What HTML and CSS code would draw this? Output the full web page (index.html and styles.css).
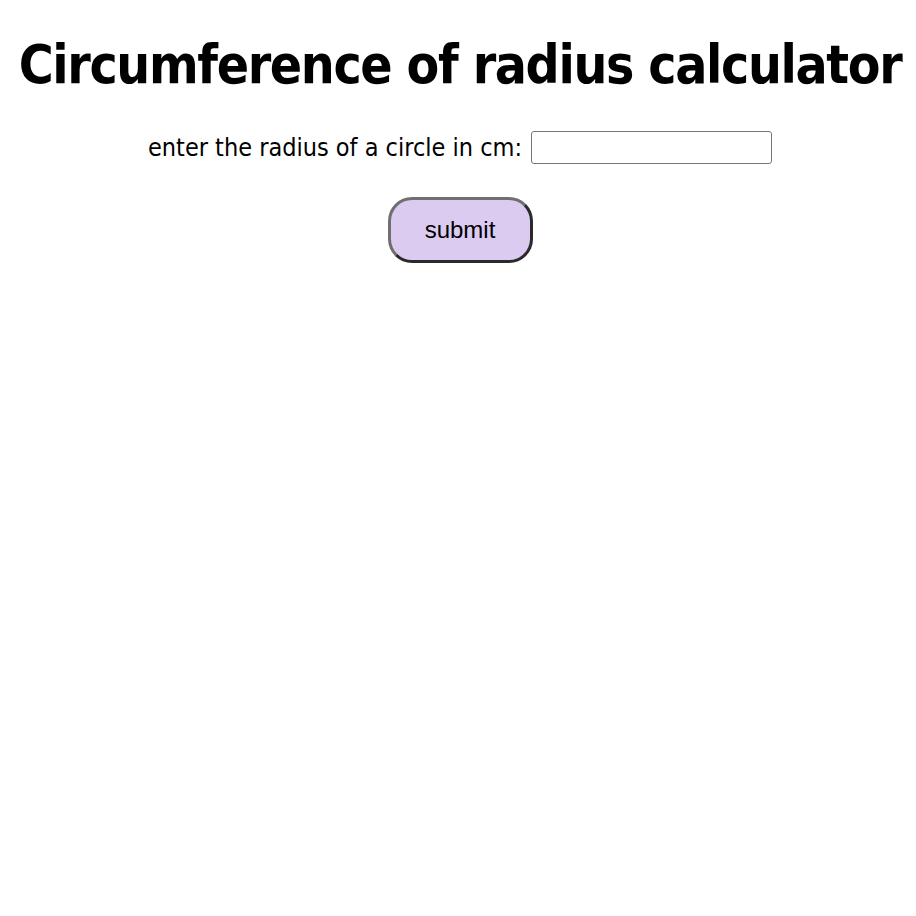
FILE: index.html
```html
<!DOCTYPE html>
<html>
<head>
<meta charset="utf-8">
<link rel="stylesheet" href="styles.css">
</head>
<body>
<h1 class="title">Circumference of radius calculator</h1>
<form class="calc">
  <label class="row">enter the radius of a circle in cm: <input class="field" type="text"></label>
  <button class="submit" type="button">submit</button>
</form>
</body>
</html>
```
FILE: styles.css
```css
body {
  margin: 8px 6px 8px 10px;
  font-family: "DejaVu Sans Condensed", "DejaVu Sans", sans-serif;
  background: #fff;
  color: #000;
}
.title {
  margin: 26px 0 0;
  text-align: center;
  font-size: 53px;
  font-weight: bold;
  letter-spacing: -1.35px;
  line-height: 62px;
}
.calc {
  display: flex;
  flex-direction: column;
  align-items: center;
  margin-top: 35px;
}
.row {
  display: flex;
  align-items: center;
  gap: 9px;
  font-size: 25px;
}
.field {
  width: 241px;
  height: 33px;
  box-sizing: border-box;
  border: 1px solid #767676;
  border-radius: 3px;
  padding: 0 4px;
  font-size: 16px;
}
.submit {
  margin-top: 33px;
  width: 145px;
  height: 66px;
  box-sizing: border-box;
  background: #dccbf0;
  border: 3px solid #2a2a2a;
  border-top-color: #6f6f6f;
  border-left-color: #6f6f6f;
  border-radius: 24px;
  font-family: "Liberation Sans", Arial, sans-serif;
  font-size: 24px;
  color: #000;
}
```
